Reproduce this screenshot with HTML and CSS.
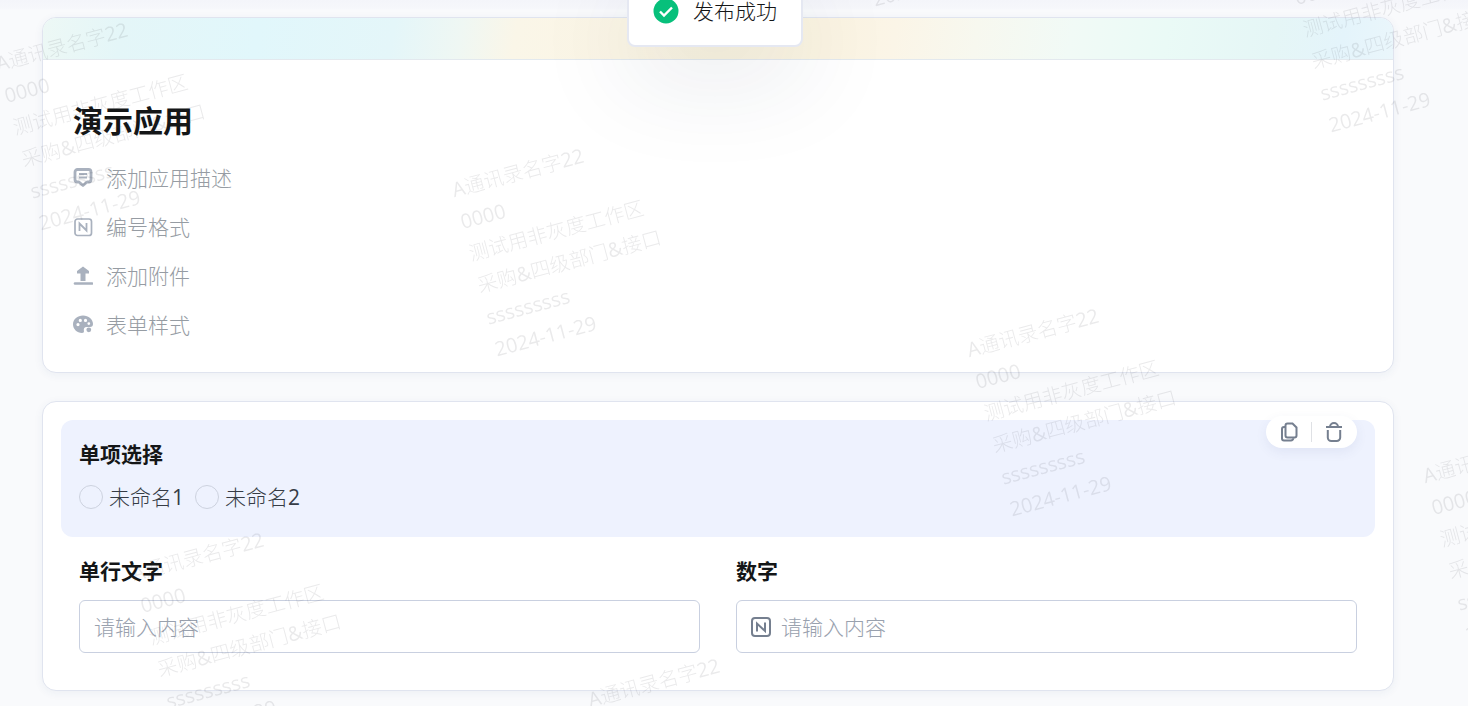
FILE: index.html
```html
<!DOCTYPE html>
<html lang="zh-CN">
<head>
  <meta charset="UTF-8" />
  <meta name="viewport" content="width=device-width, initial-scale=1.0"/>
  <title>演示应用</title>
  <link rel="stylesheet" href="styles.css">
</head>
<body>

  <main class="page">
    <section class="card">
      <div class="banner"></div>
      <div class="card-body">
        <h1>演示应用</h1>
        <div class="settings">
          <button type="button" class="setting">
            <svg viewBox="0 0 20 20" width="20" height="20"><path d="M4.500 1.500h11a2.500 2.500 0 0 1 2.500 2.500v7.500a2.500 2.500 0 0 1-2.500 2.500H14l-4 3.500L6 14H4.500A2.500 2.500 0 0 1 2 11.500V4a2.500 2.500 0 0 1 2.500-2.500z" fill="none" stroke="currentColor" stroke-width="2.800" stroke-linejoin="round"/><path d="M6 6h8M6 9.500h8" fill="none" stroke="currentColor" stroke-width="1.800"/></svg>
            添加应用描述
          </button>
          <button type="button" class="setting">
            <svg viewBox="0 0 20 20" width="20" height="20"><rect x="2" y="2" width="16.500" height="16.500" rx="2.500" fill="none" stroke="currentColor" stroke-width="1.700"/><path d="M6.500 14V6.500l7 7V6" fill="none" stroke="currentColor" stroke-width="1.800"/></svg>
            编号格式
          </button>
          <button type="button" class="setting">
            <svg viewBox="0 0 20 20" width="20" height="20"><path d="M10 .5l6 4.500v2.500h-3.500V15h-5V7.500H4V5z" fill="currentColor"/><path d="M2 17.500h17" stroke="currentColor" stroke-width="2.600" stroke-linecap="round"/></svg>
            添加附件
          </button>
          <button type="button" class="setting">
            <svg viewBox="0 0 20 20" width="20" height="20"><path fill="currentColor" fill-rule="evenodd" d="M10 .5C4.500.5 0 4.300 0 9.300c0 4.800 4 8.700 9 8.700 1.500 0 2.200-1 1.900-2.300-.5-2 .6-3.700 2.600-3.700H17c2 0 3-1.200 3-3C20 4.200 15.600.5 10 .5zM5 8a1.600 1.600 0 1 1 0 3.200A1.600 1.600 0 0 1 5 8zM7.300 3.800a1.600 1.600 0 1 1 0 3.200 1.600 1.600 0 0 1 0-3.200zm5.200 0a1.600 1.600 0 1 1 0 3.200 1.600 1.600 0 0 1 0-3.200zm3.300 3.400a1.400 1.400 0 1 1 0 2.800 1.400 1.400 0 0 1 0-2.800z"/><circle cx="15.800" cy="14.800" r="2.400" fill="currentColor"/></svg>
            表单样式
          </button>
        </div>
      </div>
    </section>

    <section class="card form-card">
      <fieldset class="question active">
        <legend>单项选择</legend>
        <div class="options">
          <label><input type="radio" name="choice"> <span>未命名<span class="latin">1</span></span></label>
          <label><input type="radio" name="choice"> <span>未命名<span class="latin">2</span></span></label>
        </div>
        <div class="tools">
          <button type="button" aria-label="复制">
            <svg viewBox="0 0 20 20" width="20" height="20"><path d="M8.500 1.500h5l4 4v8a2 2 0 0 1-2 2h-7a2 2 0 0 1-2-2v-10a2 2 0 0 1 2-2z"/><path d="M6 5H5a2 2 0 0 0-2 2v9.500a2 2 0 0 0 2 2h7a2.300 2.300 0 0 0 2.300-2.300"/></svg>
          </button>
          <span class="divider"></span>
          <button type="button" aria-label="删除">
            <svg viewBox="0 0 20 22" width="20" height="22"><path d="M2 6h16M6 6a4 4 0 0 1 8 0M3.800 9v7.500a3.500 3.500 0 0 0 3.500 3.500h5.400a3.500 3.500 0 0 0 3.500-3.500V9"/></svg>
          </button>
        </div>
      </fieldset>

      <div class="fields">
        <div class="field">
          <label for="singleText">单行文字</label>
          <div class="input-box">
            <input type="text" id="singleText" placeholder="请输入内容">
          </div>
        </div>
        <div class="field">
          <label for="number">数字</label>
          <div class="input-box">
            <svg viewBox="0 0 20 20" width="20" height="20"><rect x="1" y="1" width="18" height="18" rx="3" fill="none" stroke="currentColor" stroke-width="2"/><path d="M6 14.500V6.500l8 7.500V5.500" fill="none" stroke="currentColor" stroke-width="2"/></svg>
            <input type="text" id="number" inputmode="decimal" placeholder="请输入内容">
          </div>
        </div>
      </div>
    </section>
  </main>

  <div class="toast-layer">
    <div class="toast" role="status">
      <svg viewBox="0 0 26 26" width="26" height="26"><circle cx="13" cy="13" r="12.500" fill="#07c07b"/><path d="M7 13.500l4 4 8-8" fill="none" stroke="#fff" stroke-width="2.400"/></svg>
      发布成功
    </div>
  </div>

  <div class="watermark" id="watermark" aria-hidden="true"></div>

  <script>
    const lines = ["A通讯录名字22", "0000", "测试用非灰度工作区", "采购&四级部门&接口", "sssssssss", "2024-11-29"];
    const marks = [
      [-8, 48], [448, 174], [826, -176], [1282, -50],
      [963, 334], [1419, 460], [128, 558], [584, 684]
    ];
    const watermark = document.getElementById("watermark");

    // latin runs get their own weight
    const html = lines.map(line =>
      line.replace(/[\w&-]+/g, run => `<span class="latin">${run.replace("&", "&amp;")}</span>`)
    ).join("<br>");

    marks.forEach(([x, y]) => {
      const mark = document.createElement("div");
      mark.className = "mark";
      mark.style.left = x + "px";
      mark.style.top = y + "px";
      mark.innerHTML = html;
      watermark.appendChild(mark);
    });
  </script>

</body>
</html>
```
FILE: styles.css
```css
:root {
  --bg-color: #f9fafc;
  --text-color: #141617;
  --muted: #969ca3;
  --icon: #a9b1be;
  --icon-dark: #757f8f;
  --border: #e0e4ef;
  --input-border: #c9d0e0;
  --active-bg: #eef2fe;
}

* {
  box-sizing: border-box;
}

body {
  margin: 0;
  background: linear-gradient(#f4f5fa, #f6f7fb 8px, var(--bg-color) 10px);
  background-color: var(--bg-color);
  color: var(--text-color);
  font-family: "Open Sans", "Noto Sans CJK SC", sans-serif;
  font-size: 21px;
  font-weight: 300;
  line-height: 32px;
}

button,
input {
  font: inherit;
  color: inherit;
}

button {
  padding: 0;
  border: none;
  background: none;
  cursor: pointer;
}

svg {
  flex: none;
}

.latin {
  font-weight: 400;
}

.page {
  display: flex;
  flex-direction: column;
  gap: 28px;
  padding: 17px 74px 15px 42px;
}

.card {
  background: #fff;
  border: 1px solid var(--border);
  border-radius: 14px;
  box-shadow: 0 2px 10px rgba(40, 60, 120, 0.06);
}

.banner {
  height: 42px;
  border-bottom: 1px solid #e3e9ee;
  border-radius: 13px 13px 0 0;
  background: linear-gradient(100deg, #edf8f5 0%, #e4f6f8 6%, #e1f7fb 16%, #e4f6f9 26%, #eff7f3 31%, #faf6e8 35%, #fbf5e5 43%, #faf4e0 50%, #fbf4e2 58%, #fbf5e7 63%, #f7f8ef 69%, #f1faf6 76%, #eafaf6 83%, #e5f6f6 91%, #e4f4fb 96%, #eaf6fb 100%);
}

.card-body {
  padding: 40px 30px 31px;
}

h1 {
  margin: 0 0 20px;
  font-size: 30px;
  font-weight: 700;
  line-height: 42px;
}

.settings {
  display: flex;
  flex-direction: column;
  align-items: flex-start;
  gap: 17px;
}

.setting {
  display: flex;
  align-items: center;
  gap: 13px;
  color: var(--muted);
}

.setting svg {
  color: var(--icon);
}

.form-card {
  padding: 18px;
}

.question {
  position: relative;
  min-width: 0;
  margin: 0;
  padding: 18px 18px 24px;
  border: none;
  border-radius: 12px;
}

.question.active {
  background: var(--active-bg);
}

legend {
  float: left;
  padding: 0;
  font-weight: 700;
}

.options {
  clear: both;
  display: flex;
  gap: 11px;
  padding-top: 11px;
  color: #363c46;
}

.options label {
  display: flex;
  align-items: center;
  gap: 6px;
}

.options input {
  appearance: none;
  width: 24px;
  height: 24px;
  margin: 0;
  border: 1px solid #cdd2df;
  border-radius: 50%;
}

.options input:checked {
  border: 7px solid #4c7dff;
}

.tools {
  position: absolute;
  top: -4px;
  right: 18px;
  display: flex;
  align-items: center;
  gap: 12px;
  height: 32px;
  padding: 0 13px;
  border-radius: 16px;
  background: #fff;
  box-shadow: 0 4px 12px rgba(60, 80, 140, 0.08);
}

.tools button {
  display: flex;
  color: var(--icon-dark);
}

.tools svg {
  fill: none;
  stroke: currentColor;
  stroke-width: 2;
}

.divider {
  width: 1px;
  height: 20px;
  background: #dfe1e5;
}

.fields {
  display: grid;
  grid-template-columns: 1fr 1fr;
  padding: 18px 0 19px;
}

.field {
  padding: 0 18px;
}

.field label {
  display: block;
  margin-bottom: 13px;
  font-weight: 700;
}

.input-box {
  display: flex;
  align-items: center;
  gap: 10px;
  height: 53px;
  padding: 0 14px;
  border: 1px solid var(--input-border);
  border-radius: 6px;
  color: var(--icon-dark);
}

.input-box input {
  flex: 1;
  min-width: 0;
  padding: 0;
  border: none;
  outline: none;
  background: none;
  color: var(--text-color);
}

.input-box input::placeholder {
  color: #99a1ae;
}

.toast-layer {
  position: absolute;
  top: -26px;
  left: 0;
  right: 38px;
  display: flex;
  justify-content: center;
  pointer-events: none;
}

.toast {
  display: flex;
  align-items: center;
  gap: 14px;
  height: 73px;
  padding: 0 24px;
  border: 2px solid #e5e8f2;
  border-radius: 8px;
  background: #fff;
  box-shadow: 0 30px 100px rgba(30, 45, 80, 0.1);
}

/* repeated user info laid over the whole page */
.watermark {
  position: fixed;
  inset: 0;
  overflow: hidden;
  pointer-events: none;
}

.mark {
  position: absolute;
  color: rgba(60, 65, 72, 0.11);
  font-size: 20px;
  line-height: 33px;
  white-space: nowrap;
  transform: rotate(-15deg);
  transform-origin: 0 0;
}
```
